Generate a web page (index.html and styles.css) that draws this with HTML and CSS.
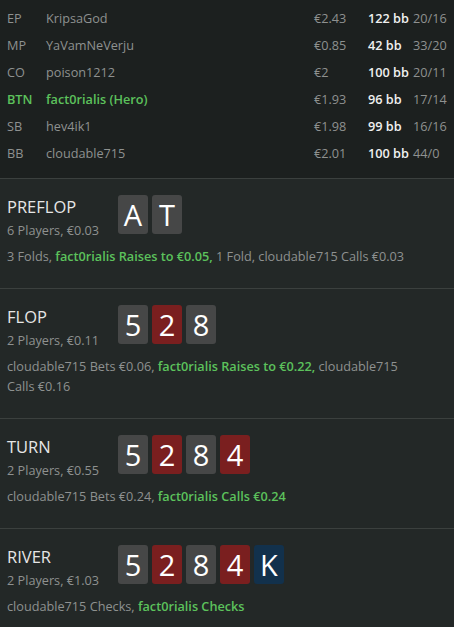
FILE: index.html
```html
<!DOCTYPE html>
<html>
<head>
<meta charset="utf-8">
<link rel="stylesheet" href="styles.css">
</head>
<body>
<div class="players">
  <div class="prow"><span class="pos">EP</span><span class="name">KripsaGod</span><span class="eur">€2.43</span><span class="bb">122 bb</span><span class="ratio">20/16</span></div>
  <div class="prow"><span class="pos">MP</span><span class="name">YaVamNeVerju</span><span class="eur">€0.85</span><span class="bb">42 bb</span><span class="ratio">33/20</span></div>
  <div class="prow"><span class="pos">CO</span><span class="name">poison1212</span><span class="eur">€2</span><span class="bb">100 bb</span><span class="ratio">20/11</span></div>
  <div class="prow hero"><span class="pos">BTN</span><span class="name">fact0rialis (Hero)</span><span class="eur">€1.93</span><span class="bb">96 bb</span><span class="ratio">17/14</span></div>
  <div class="prow"><span class="pos">SB</span><span class="name">hev4ik1</span><span class="eur">€1.98</span><span class="bb">99 bb</span><span class="ratio">16/16</span></div>
  <div class="prow"><span class="pos">BB</span><span class="name">cloudable715</span><span class="eur">€2.01</span><span class="bb">100 bb</span><span class="ratio">44/0</span></div>
</div>

<section class="street">
  <div class="head">
    <div class="info"><div class="title">PREFLOP</div><div class="sub">6 Players, €0.03</div></div>
    <div class="cards"><span class="card grey">A</span><span class="card grey">T</span></div>
  </div>
  <p class="actions">3 Folds, <b>fact0rialis Raises to €0.05,</b> 1 Fold, cloudable715 Calls €0.03</p>
</section>

<section class="street">
  <div class="head">
    <div class="info"><div class="title">FLOP</div><div class="sub">2 Players, €0.11</div></div>
    <div class="cards"><span class="card grey">5</span><span class="card red">2</span><span class="card grey">8</span></div>
  </div>
  <p class="actions wrap"><span>cloudable715 Bets €0.06,</span> <b>fact0rialis Raises to €0.22,</b> <span>cloudable715</span> <span>Calls €0.16</span></p>
</section>

<section class="street">
  <div class="head">
    <div class="info"><div class="title">TURN</div><div class="sub">2 Players, €0.55</div></div>
    <div class="cards"><span class="card grey">5</span><span class="card red">2</span><span class="card grey">8</span><span class="card red">4</span></div>
  </div>
  <p class="actions">cloudable715 Bets €0.24, <b>fact0rialis Calls €0.24</b></p>
</section>

<section class="street last">
  <div class="head">
    <div class="info"><div class="title">RIVER</div><div class="sub">2 Players, €1.03</div></div>
    <div class="cards"><span class="card grey">5</span><span class="card red">2</span><span class="card grey">8</span><span class="card red">4</span><span class="card blue">K</span></div>
  </div>
  <p class="actions">cloudable715 Checks, <b>fact0rialis Checks</b></p>
</section>
</body>
</html>
```
FILE: styles.css
```css
html, body {
  margin: 0;
  padding: 0;
  background: #232827;
  font-family: "Open Sans", "Noto Sans", sans-serif;
  font-size: 12.7px;
  color: #8e9190;
}
.players {
  background: #1c201f;
  padding: 4px 7px 12px 7px;
  border-bottom: 1px solid #3b403e;
}
.prow {
  display: grid;
  grid-template-columns: 39px 1fr 54px 33px 46px;
  height: 27px;
  align-items: center;
  white-space: nowrap;
}
.prow .bb {
  text-align: right;
  color: #f0f0f0;
  font-weight: 600;
}
.prow .ratio {
  padding-left: 12px;
}
.prow.hero .pos,
.prow.hero .name {
  color: #5cc25c;
  font-weight: 600;
}
.street {
  padding: 16px 7px 22px 7px;
  border-bottom: 1px solid #3b403e;
}
.street.last {
  border-bottom: none;
}
.head {
  display: flex;
  align-items: flex-start;
}
.info {
  width: 111px;
  flex: none;
}
.title {
  font-size: 16.5px;
  line-height: 24px;
  color: #e6e6e6;
}
.sub {
  margin-top: 1px;
  line-height: 20px;
}
.cards {
  display: flex;
  gap: 4px;
}
.card {
  width: 30px;
  height: 39px;
  border-radius: 3px;
  color: #ffffff;
  font-size: 29px;
  line-height: 39px;
  text-align: center;
}
.card.grey { background: #464747; }
.card.red { background: #7a1f1f; }
.card.blue { background: #12314c; }
.actions {
  margin: 6px 0 0 0;
  line-height: 20px;
}
.actions.wrap {
  max-width: 405px;
}
.actions span {
  white-space: nowrap;
}
.actions b {
  color: #5cc25c;
  font-weight: 600;
}
```
